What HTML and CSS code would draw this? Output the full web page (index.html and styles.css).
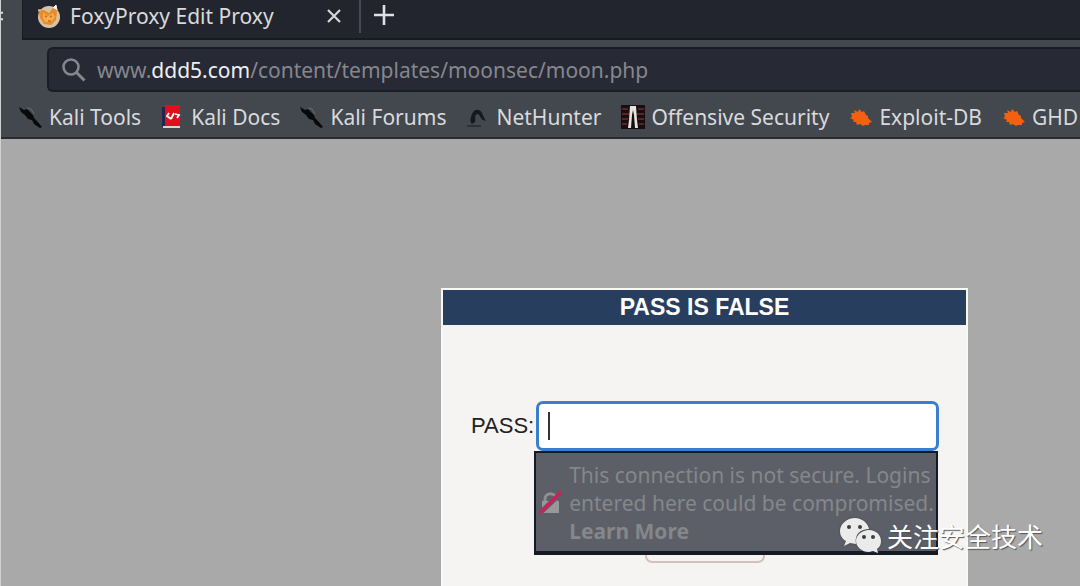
FILE: index.html
```html
<!DOCTYPE html>
<html lang="en">
<head>
<meta charset="utf-8">
<title>FoxyProxy Edit Proxy</title>
<link rel="stylesheet" href="styles.css">
</head>
<body>
<svg class="defs" aria-hidden="true">
  <symbol id="kali" viewBox="0 0 24 24"><path d="M0 2l5 3 3-1 4 4 2 2 1 3 3 3 5 6-2 1-6-4-2-4-4-1-3-4-4-3z" fill="#08090b"/><path d="M8 3l4 1 3 5" fill="none" stroke="#6b6f71" stroke-width="1"/></symbol>
  <symbol id="exploit" viewBox="0 0 24 24"><path d="M2 8l4 0-1-3 4 2 1-3 3 3 2-1 2 4 2 1 0 2 4 4-3 1 0 2-4 0-2 1-3-2-3 1-1-3-3 0 1-2-4-2 2-1z" fill="#f2610f"/></symbol>
</svg>
<header class="chrome">
  <div class="tabs">
    <span class="prev"><svg viewBox="0 0 6 14"><path d="M0 2h3M0 12h3" fill="none" stroke="#ddd" stroke-width="3"/></svg></span>
    <div class="strip">
      <div class="tab">
        <svg class="fox" viewBox="0 0 24 24"><circle cx="12" cy="13" r="11" fill="#d6c3a4"/><path d="M1 6l6 0 5 3 3-4 4-4 1 7-1 8-5 5-7-1-4-6z" fill="#e98b2c"/><path d="M6 9l5 3 5-3 2 4-4 5-6 0-2-4z" fill="#f6ad4a"/><path d="M8 12l2 1m5-1l-2 1m-2 4l3 0" stroke="#c46f1f" stroke-width="1.5"/><path d="M16 4l3-3 1 5M1 6l3 0" fill="#fff" stroke="#eee"/></svg>
        <span class="title">FoxyProxy Edit Proxy</span>
        <button class="tool close" aria-label="Close tab"><svg viewBox="0 0 16 16"><path d="M2 2l12 12M14 2L2 14" stroke="#d6d7d9" stroke-width="2.2"/></svg></button>
      </div>
      <button class="tool add" aria-label="New tab"><svg viewBox="0 0 22 22"><path d="M11 1v20M1 11h20" stroke="#e0e1e3" stroke-width="2.6"/></svg></button>
    </div>
  </div>
  <div class="address">
    <svg class="search" viewBox="0 0 26 26"><circle cx="10" cy="10" r="7.5" fill="none" stroke="#85878b" stroke-width="2.6"/><path d="M15.500 15.500l8 8" stroke="#85878b" stroke-width="3"/></svg>
    <a class="url" href="#">www.<span class="host">ddd5.com</span>/content/templates/moonsec/moon.php</a>
  </div>
  <nav class="bookmarks">
    <a href="#"><svg><use href="#kali"/></svg>Kali Tools</a>
    <a href="#"><svg viewBox="0 0 24 24"><path d="M1 2h4v20H1z" fill="#27234e"/><path d="M4 0h15v21H4z" fill="#dd101d"/><path d="M2 21h17v2H2z" fill="#d8d5d8"/><path d="M8 8l-2 3 4 3m3-6l-3 6m4-5l4 1-2 3" fill="none" stroke="#fff" stroke-width="1.800"/></svg>Kali Docs</a>
    <a href="#"><svg><use href="#kali"/></svg>Kali Forums</a>
    <a href="#"><svg viewBox="0 0 24 24"><path d="M1 21h14" stroke="#2d3035" stroke-width="2"/><path d="M6 19C3 16 5 12 6 9c2-5 7-6 10-1 1 3 2 5 4 8l-3-1c-3-2-3-6-6-6-3 1-1 5-2 8z" fill="#15181c"/></svg>NetHunter</a>
    <a href="#"><svg viewBox="0 0 24 24"><path d="M0 0h24v24H0z" fill="#180d10"/><path d="M1 4h6M1 9h7M1 14h6M1 19h5M17 4h6M16 9h7M17 14h6M18 19h5" stroke="#5c2427" stroke-width="2"/><path d="M9 1h6l1 14 1 8h-3l-1-13-1-5-1 5-1 13H7l1-8z" fill="#e8e5df"/></svg>Offensive Security</a>
    <a href="#"><svg><use href="#exploit"/></svg>Exploit-DB</a>
    <a href="#"><svg><use href="#exploit"/></svg>GHDB</a>
  </nav>
</header>
<main class="page">
  <form class="login">
    <h1>PASS IS FALSE</h1>
    <div class="fields">
      <label for="pass">PASS:</label>
      <div class="field">
        <input id="pass" type="password">
        <span class="caret"></span>
        <div class="warning">
          <svg viewBox="0 0 24 24"><path d="M6 11V8c0-7 11-7 11 0v3" fill="none" stroke="#8e9092" stroke-width="3"/><path d="M3 10h17v12H3z" fill="#96989a"/><path d="M1 22L22 2" stroke="#5c5e66" stroke-width="5"/><path d="M1 22L22 1" stroke="#d81b55" stroke-width="3"/></svg>
          <p>This connection is not secure. Logins entered here could be compromised. <a href="#">Learn More</a></p>
        </div>
      </div>
    </div>
    <button class="submit" type="button" aria-label="Submit"></button>
  </form>
</main>
<div class="watermark">
  <svg viewBox="0 0 42 36"><path d="M15 0C7 0 0 6 0 13c0 4 2 8 6 10l-2 5 6-3 6 1C14 16 21 11 29 11 28 5 22 0 15 0z" fill="#ebebec"/><path d="M29 12c-7 0-13 5-13 11s6 11 13 11l4-1 5 2-1-4c3-2 4-5 4-8 0-6-5-11-12-11z" fill="#ebebec"/><g fill="#3c3e43"><circle cx="9" cy="9" r="2"/><circle cx="20" cy="9" r="2"/><circle cx="24" cy="19" r="2"/><circle cx="33" cy="19" r="2"/></g></svg>
  <span lang="zh">关注安全技术</span>
</div>
</body>
</html>
```
FILE: styles.css
```css
* { box-sizing: border-box; }
body {
  margin: 0;
  min-height: 100vh;
  display: flex;
  flex-direction: column;
  overflow: hidden;
  border-left: 1px solid #d0d1d2;
  background: #a9a9a9;
  font: 21px/28px "Noto Sans", sans-serif;
}
.defs { position: absolute; width: 0; height: 0; }
a { color: inherit; text-decoration: none; }
.chrome {
  background: #43474e;
  color: #d9dadc;
  border-bottom: 2px solid #282b2f;
  overflow: hidden;
}
.tabs { display: flex; height: 40px; }
.prev { width: 21px; padding-top: 9px; }
.prev svg { display: block; width: 4px; height: 14px; }
.strip {
  flex: 1;
  display: flex;
  background: #22252e;
  border-left: 1px solid #181a20;
  border-bottom: 2px solid #181a20;
}
.tab {
  width: 338px;
  height: 33px;
  display: flex;
  align-items: center;
  padding: 0 0 2px 14px;
  gap: 9px;
  border-right: 2px solid #484b52;
}
.fox { width: 24px; height: 24px; flex: none; }
.title { flex: 1; white-space: nowrap; }
.tool { display: flex; padding: 0; border: 0; background: none; }
.close { margin-right: 17px; }
.close svg { width: 16px; height: 16px; }
.add { padding: 4px 12px; }
.add svg { width: 22px; height: 22px; }
.address {
  display: flex;
  align-items: center;
  height: 45px;
  margin: 7px 0 0 46px;
  padding-left: 12px;
  gap: 10px;
  background: #272935;
  border: 2px solid #1b1d25;
  border-right: 0;
  border-radius: 6px 0 0 6px;
}
.search { width: 26px; height: 26px; }
.url { color: #85878d; }
.host { color: #eeeff1; }
.bookmarks {
  display: flex;
  gap: 20px;
  height: 45px;
  padding: 4px 0 0 18px;
}
.bookmarks a {
  display: flex;
  flex: none;
  align-items: center;
  gap: 6px;
  white-space: nowrap;
}
.bookmarks svg { width: 24px; height: 24px; }
.page {
  flex: 1;
  display: flex;
  justify-content: center;
  padding: 149px 0 0 328px;
}
.login {
  width: 527px;
  background: #f5f4f2;
  border: 2px solid #f8f8f7;
  border-bottom: 0;
  font-size: 22px;
  font-family: "Liberation Sans", sans-serif;
}
h1 {
  margin: 0;
  background: #283e5f;
  color: #fff;
  font-size: 23px;
  line-height: 35px;
  text-align: center;
}
.fields {
  display: flex;
  align-items: center;
  padding: 76px 27px 0 28px;
  color: #222;
}
.field { flex: 1; position: relative; margin-left: 2px; }
input {
  display: block;
  width: 100%;
  height: 50px;
  padding: 0 10px;
  border: 3px solid #397fcb;
  border-radius: 7px;
  background: #fff;
  font: inherit;
  outline: 0;
}
.caret {
  position: absolute;
  left: 12px;
  top: 11px;
  width: 2px;
  height: 28px;
  background: #333;
}
.warning {
  position: absolute;
  top: 50px;
  left: -2px;
  right: 1px;
  display: flex;
  align-items: center;
  gap: 6px;
  padding: 8px 0 6px 3px;
  background: #5c5f67;
  border: 2px solid #151a27;
  border-bottom-width: 4px;
  color: #85878a;
  font-size: 21px;
  font-family: "Noto Sans", sans-serif;
}
.warning svg { width: 24px; height: 24px; flex: none; }
.warning p { margin: 0; }
.warning a { font-weight: bold; }
.submit {
  display: block;
  width: 120px;
  height: 43px;
  margin: 69px auto 0;
  background: #f5f4f2;
  border: 2px solid #d1c2c0;
  border-radius: 7px;
}
.watermark {
  position: absolute;
  right: 37px;
  bottom: 30px;
  display: flex;
  align-items: center;
  gap: 5px;
  color: #fff;
  font: 26px/40px "Noto Sans CJK SC", sans-serif;
  text-shadow: 1px 1px 1px #555;
}
.watermark svg { width: 42px; height: 36px; filter: drop-shadow(0 0 1px #444); }
```
